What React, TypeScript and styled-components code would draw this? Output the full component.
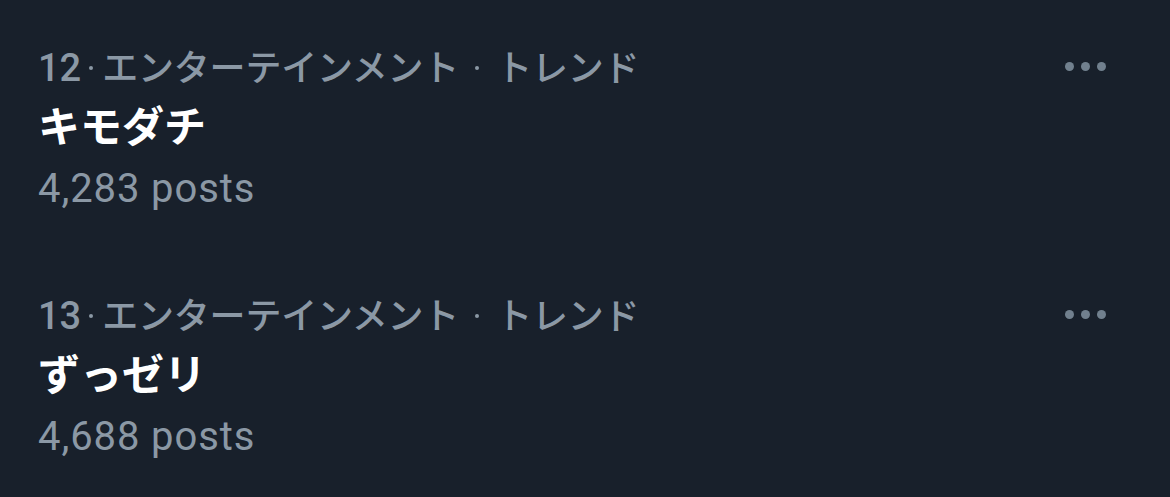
import React from "react";
import styled, { createGlobalStyle } from "styled-components";

const Global = createGlobalStyle`
  html, body { margin: 0; padding: 0; background: #18202b; }
  body { width: 1170px; height: 497px; overflow: hidden; }
`;

const List = styled.div`
  display: flex;
  flex-direction: column;
  gap: 75px;
  padding: 41px 64px 0 38px;
  background: #18202b;
  height: 497px;
  box-sizing: border-box;
`;

const Trend = styled.div`
  display: flex;
  flex-direction: column;
`;

const Header = styled.div`
  display: flex;
  align-items: center;
  justify-content: space-between;
  height: 50px;
`;

const Meta = styled.div`
  font-family: Roboto, "Noto Sans CJK JP", sans-serif;
  font-size: 39px;
  font-weight: 500;
  line-height: 50px;
  color: #8b98a5;
  white-space: nowrap;
  display: flex;
  align-items: baseline;
`;

const Rank = styled.span`
  font-size: 38px;
`;

const Sep = styled.span<{ $left: number; $right: number }>`
  align-self: center;
  width: 4px;
  height: 4px;
  border-radius: 50%;
  background: #8b98a5;
  margin: 3px ${(p) => p.$right}px 0 ${(p) => p.$left}px;
`;

const Jp = styled.span`
  font-family: "Noto Sans CJK JP", sans-serif;
  font-size: 36px;
  font-weight: 500;
  letter-spacing: -0.2px;
`;

const More = styled.div`
  display: flex;
  gap: 7px;
`;

const Circle = styled.span`
  width: 9px;
  height: 9px;
  border-radius: 50%;
  background: #71808e;
`;

const Title = styled.div`
  margin-top: 3px;
  font-family: "Noto Sans CJK JP", sans-serif;
  font-weight: 700;
  font-size: 42px;
  line-height: 60px;
  color: #ffffff;
`;

const Posts = styled.div`
  margin-top: 10px;
  font-family: Roboto, sans-serif;
  font-size: 40px;
  line-height: 50px;
  letter-spacing: 0.9px;
  color: #8b98a5;
`;

const trends = [
  { rank: 12, title: "キモダチ", posts: "4,283" },
  { rank: 13, title: "ずっゼリ", posts: "4,688" },
];

export default function App() {
  return (
    <>
      <Global />
      <List>
        {trends.map((t) => (
          <Trend key={t.rank}>
            <Header>
              <Meta>
                <Rank>{t.rank}</Rank>
                <Sep $left={8} $right={9} />
                <Jp>エンターテインメント</Jp>
                <Sep $left={16} $right={17} />
                <Jp>トレンド</Jp>
              </Meta>
              <More>
                <Circle />
                <Circle />
                <Circle />
              </More>
            </Header>
            <Title>{t.title}</Title>
            <Posts>{t.posts} posts</Posts>
          </Trend>
        ))}
      </List>
    </>
  );
}
